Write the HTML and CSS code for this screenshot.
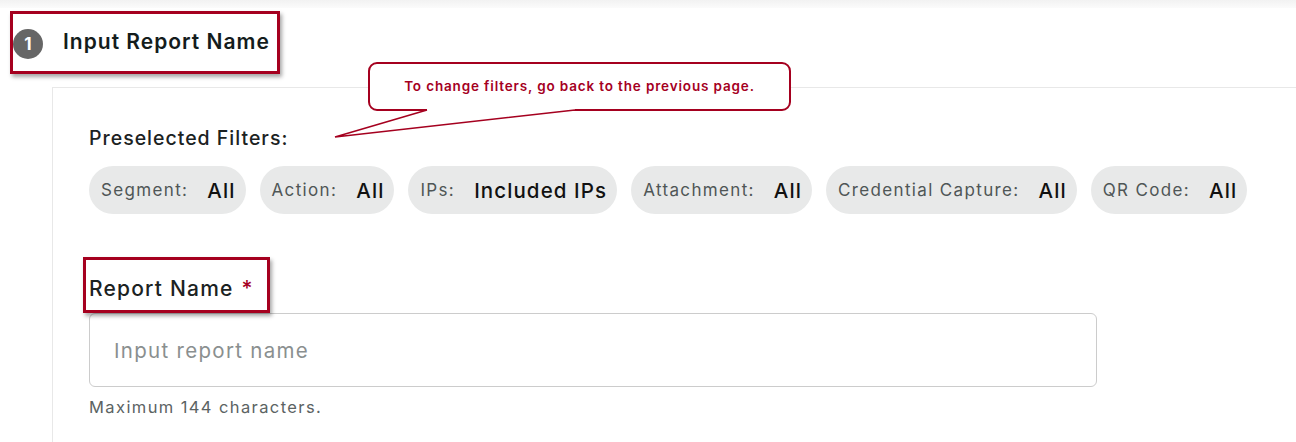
FILE: index.html
```html
<html>
<head>
<title>New Report || Step 1</title>
<link rel="stylesheet" href="styles.css">
</head>

<body>
	<div class="topbar"></div>

	<div class="step-head">
		<span class="step-num">1</span>
		<h2 class="step-title">Input Report Name</h2>
	</div>

	<div class="card">
		<div class="callout">
			To change filters, go back to the previous page.
			<svg class="callout-tail" width="250" height="40" viewBox="0 0 250 40">
				<polygon points="97,7 245,7 245,10 5,37 97,10" fill="#fff"/>
				<polyline points="97,10 5,37 245,10" fill="none" stroke="#a5001f" stroke-width="1.6"/>
			</svg>
		</div>

		<div class="filters-title">Preselected Filters:</div>
		<div class="chips">
			<div class="chip"><span class="chip-label">Segment:</span><span class="chip-value">All</span></div>
			<div class="chip"><span class="chip-label">Action:</span><span class="chip-value">All</span></div>
			<div class="chip"><span class="chip-label">IPs:</span><span class="chip-value">Included IPs</span></div>
			<div class="chip"><span class="chip-label">Attachment:</span><span class="chip-value">All</span></div>
			<div class="chip"><span class="chip-label">Credential Capture:</span><span class="chip-value">All</span></div>
			<div class="chip"><span class="chip-label">QR Code:</span><span class="chip-value">All</span></div>
		</div>

		<div class="field">
			<div class="label-mark">
				<label for="txtname">Report Name</label><span class="req">*</span>
			</div>
			<input type="text" id="txtname" class="text-input" placeholder="Input report name">
			<div class="hint">Maximum 144 characters.</div>
		</div>
	</div>
</body>
</html>
```

FILE: styles.css
```css
body {
	margin: 0px;
	background: white;
	font-family: Inter, "Open Sans", sans-serif;
	color: #1b2222;
	overflow: hidden;
}

.topbar {
	height: 8px;
	background: linear-gradient(#f2f2f2, #fbfbfb);
}

.step-head {
	display: inline-flex;
	align-items: center;
	height: 57px;
	width: 264px;
	margin: 3px 0 0 10px;
	border: 3px solid #a5001f;
	box-shadow: 2px 3px 4px rgba(0, 0, 0, 0.35);
}

.step-num {
	width: 30px;
	height: 30px;
	border-radius: 50%;
	background: #666;
	color: white;
	font-size: 17px;
	font-weight: 700;
	display: flex;
	align-items: center;
	justify-content: center;
	margin-top: 2px;
}

.step-title {
	margin: 0 0 3px 20px;
	font-size: 21px;
	font-weight: 600;
	letter-spacing: 1px;
	color: #141c1c;
}

.card {
	position: relative;
	margin: 13px 0 0 52px;
	border-top: 1px solid #e8e8e8;
	border-left: 1px solid #e8e8e8;
	padding: 35px 0 40px 36px;
}

.callout {
	position: absolute;
	left: 315px;
	top: -26px;
	width: 419px;
	height: 45px;
	border: 2px solid #a5001f;
	border-radius: 9px;
	background: white;
	color: #a5001f;
	font-size: 13.5px;
	font-weight: 600;
	letter-spacing: 0.85px;
	text-align: center;
	line-height: 45px;
	z-index: 2;
}

.callout-tail {
	position: absolute;
	left: -40px;
	top: 36px;
	overflow: visible;
}

.filters-title {
	font-size: 19.5px;
	font-weight: 500;
	letter-spacing: 1px;
	height: 30px;
	line-height: 30px;
}

.chips {
	display: flex;
	gap: 14px;
	margin-top: 13px;
}

.chip {
	display: flex;
	align-items: center;
	gap: 19px;
	height: 48px;
	padding: 0 10px 0 12px;
	border-radius: 24px;
	background: #e8e9e9;
}

.chip-label {
	font-size: 17px;
	letter-spacing: 1.35px;
	color: #4f5656;
}

.chip-value {
	font-size: 20.5px;
	font-weight: 450;
	letter-spacing: 1.1px;
	color: #111;
}

.field {
	margin-top: 43px;
}

.label-mark {
	display: inline-block;
	box-sizing: border-box;
	margin-left: -6px;
	padding: 14px 13px 0 3px;
	height: 56px;
	border: 3px solid #a5001f;
	box-shadow: 2px 3px 4px rgba(0, 0, 0, 0.35);
	font-size: 21px;
	font-weight: 500;
	letter-spacing: 1.2px;
	line-height: 30px;
	position: relative;
	z-index: 1;
}

.req {
	color: #a5001f;
	margin-left: 8px;
}

.text-input {
	display: block;
	box-sizing: border-box;
	width: 1008px;
	height: 74px;
	border: 1px solid #cccccc;
	border-radius: 6px;
	padding: 0 24px;
	font-family: Inter, "Open Sans", sans-serif;
	font-size: 20.5px;
	letter-spacing: 1.3px;
	color: #333;
	outline: none;
}

.text-input::placeholder {
	color: #8a8f8f;
}

.hint {
	margin-top: 10px;
	font-size: 16.5px;
	letter-spacing: 1.4px;
	color: #5b6363;
}
```
